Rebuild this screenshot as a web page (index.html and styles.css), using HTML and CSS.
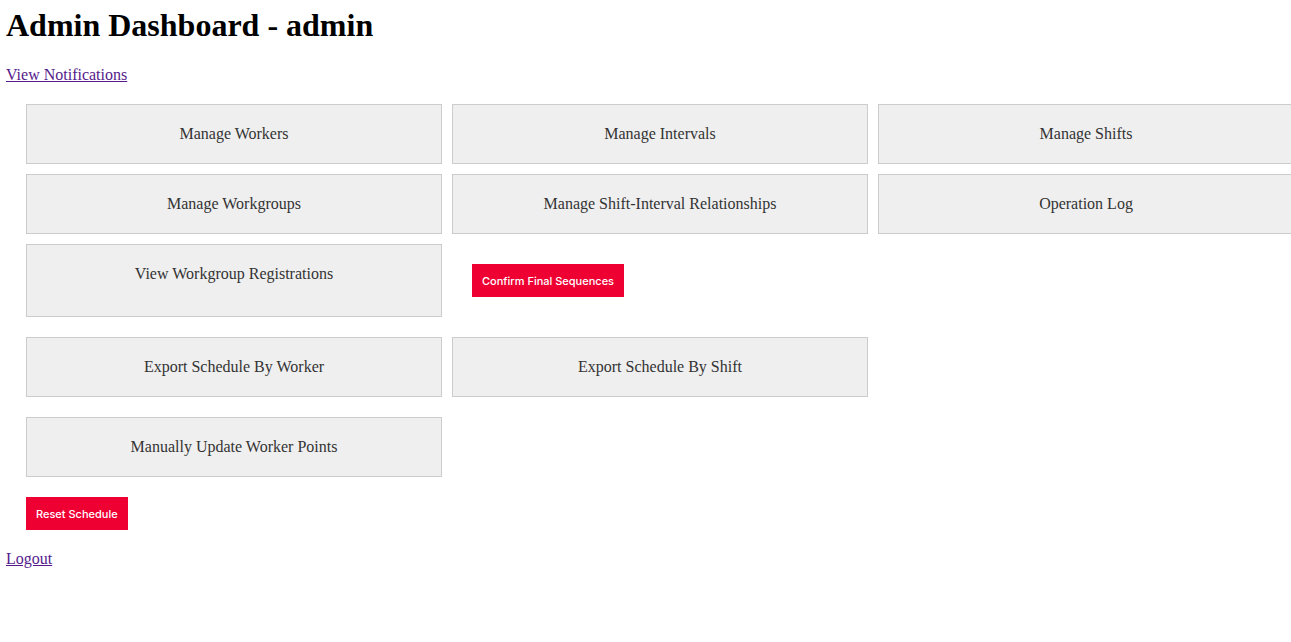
FILE: index.html
```html
<!DOCTYPE html>
<html lang="en">
<head>
<meta charset="utf-8">
<title>Admin Dashboard</title>
<link rel="stylesheet" href="styles.css">
</head>
<body>
<h1 class="title">Admin Dashboard - admin</h1>
<a class="link" href="#">View Notifications</a>
<div class="panel">
  <div class="grid">
    <div class="card">Manage Workers</div>
    <div class="card">Manage Intervals</div>
    <div class="card">Manage Shifts</div>
    <div class="card">Manage Workgroups</div>
    <div class="card">Manage Shift-Interval Relationships</div>
    <div class="card">Operation Log</div>
    <div class="card">View Workgroup Registrations</div>
    <form class="action-cell"><button type="button" class="danger">Confirm Final Sequences</button></form>
  </div>
  <div class="grid">
    <div class="card">Export Schedule By Worker</div>
    <div class="card">Export Schedule By Shift</div>
  </div>
  <div class="grid">
    <div class="card">Manually Update Worker Points</div>
  </div>
  <form class="reset-form"><button type="button" class="danger">Reset Schedule</button></form>
</div>
<a class="link" href="#">Logout</a>
</body>
</html>
```
FILE: styles.css
```css
html {
  overflow-x: hidden;
}
body {
  margin: 0;
  padding: 7px 6px;
  font-family: "Liberation Serif", "Times New Roman", serif;
  font-size: 16px;
  color: #000;
  background: #fff;
}
.title {
  margin: 0 0 22.4px;
  font-size: 32px;
  font-weight: bold;
  line-height: normal;
}
.link {
  display: block;
  width: max-content;
  color: #551a8b;
  text-decoration: underline;
}
.panel {
  padding: 20px 20px 0;
}
.grid {
  display: grid;
  grid-template-columns: repeat(3, 416px);
  gap: 10px;
  margin-bottom: 20px;
}
.card {
  box-sizing: border-box;
  padding: 20px;
  border: 1px solid #cccccc;
  background: #efefef;
  color: #333;
  text-align: center;
  line-height: normal;
}
.action-cell {
  margin: 0;
  padding: 20px;
}
.reset-form {
  margin: 0 0 20px;
}
.danger {
  display: block;
  border: 0;
  border-radius: 0;
  padding: 11px 10px 9px;
  background: #ee0033;
  color: #fff;
  font-family: Inter, "Liberation Sans", sans-serif;
  font-size: 11px;
  font-weight: 500;
  line-height: 13px;
  cursor: pointer;
}
```
